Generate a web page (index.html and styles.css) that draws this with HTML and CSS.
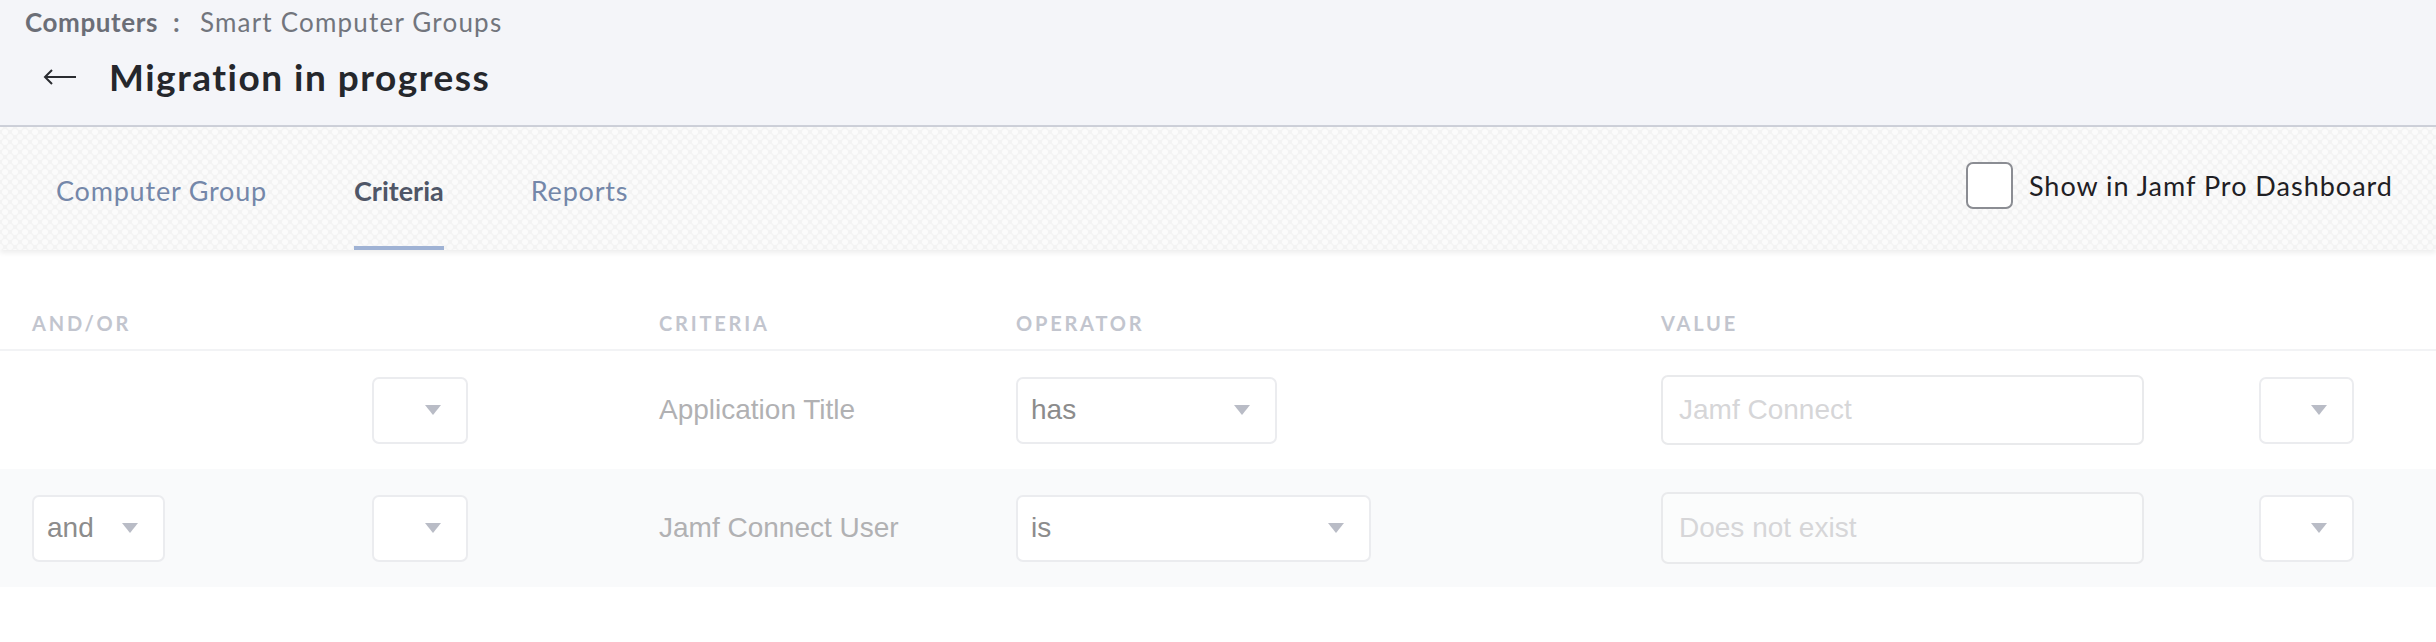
FILE: index.html
```html
<!DOCTYPE html>
<html>
<head>
<meta charset="utf-8">
<link rel="stylesheet" href="styles.css">
</head>
<body>
<div class="page-header">
  <div class="breadcrumb">
    <span class="crumb-root">Computers</span>
    <span class="crumb-sep">:</span>
    <span class="crumb-leaf">Smart Computer Groups</span>
  </div>
  <div class="title-row">
    <span class="back-arrow">
      <svg width="34" height="16" viewBox="0 0 34 16"><path d="M33 8H2M9 1L2 8l7 7" fill="none" stroke="#2a2c31" stroke-width="2"/></svg>
    </span>
    <h1 class="title">Migration in progress</h1>
  </div>
</div>

<div class="tabs-bar">
  <nav class="tabs">
    <a class="tab">Computer Group</a>
    <a class="tab tab-active">Criteria</a>
    <a class="tab">Reports</a>
  </nav>
  <label class="dash-check">
    <span class="checkbox"></span>
    <span class="check-label">Show in Jamf Pro Dashboard</span>
  </label>
</div>

<div class="criteria-table">
  <div class="row head-row">
    <div class="hcell">AND/OR</div>
    <div class="hcell"></div>
    <div class="hcell">CRITERIA</div>
    <div class="hcell">OPERATOR</div>
    <div class="hcell">VALUE</div>
    <div class="hcell"></div>
  </div>
  <div class="row data-row">
    <div class="cell"></div>
    <div class="cell"><div class="select sel-paren"><span class="sel-text"></span><span class="caret"></span></div></div>
    <div class="cell crit-name">Application Title</div>
    <div class="cell"><div class="select sel-has"><span class="sel-text">has</span><span class="caret"></span></div></div>
    <div class="cell"><div class="input">Jamf Connect</div></div>
    <div class="cell"><div class="select sel-paren-r"><span class="sel-text"></span><span class="caret"></span></div></div>
  </div>
  <div class="row data-row alt">
    <div class="cell"><div class="select sel-and"><span class="sel-text">and</span><span class="caret"></span></div></div>
    <div class="cell"><div class="select sel-paren"><span class="sel-text"></span><span class="caret"></span></div></div>
    <div class="cell crit-name">Jamf Connect User</div>
    <div class="cell"><div class="select sel-is"><span class="sel-text">is</span><span class="caret"></span></div></div>
    <div class="cell"><div class="input input-alt">Does not exist</div></div>
    <div class="cell"><div class="select sel-paren-r"><span class="sel-text"></span><span class="caret"></span></div></div>
  </div>
</div>
</body>
</html>
```

FILE: styles.css
```css
html, body {
  margin: 0;
  padding: 0;
  background: #ffffff;
}
body {
  width: 2436px;
  height: 642px;
  overflow: hidden;
  font-family: "Lato", "Liberation Sans", sans-serif;
}

.page-header {
  background: #f4f5f9;
  height: 125px;
  border-bottom: 2px solid #cdd0d9;
  box-sizing: content-box;
}
.breadcrumb {
  display: flex;
  align-items: baseline;
  padding: 8px 0 0 25px;
  font-size: 26px;
  letter-spacing: 1.2px;
  line-height: 28px;
  color: #72757d;
}
.crumb-root {
  font-weight: 700;
  color: #6b6e77;
  letter-spacing: 0.6px;
}
.crumb-sep {
  margin: 0 19px 0 15px;
  font-weight: 700;
}
.title-row {
  display: flex;
  align-items: center;
  padding-left: 43px;
  margin-top: 16px;
  height: 50px;
}
.back-arrow {
  display: flex;
  width: 34px;
  margin-right: 32px;
}
.title {
  margin: 0;
  font-size: 37px;
  font-weight: 700;
  letter-spacing: 1.5px;
  color: #25272c;
  line-height: 50px;
}

.tabs-bar {
  height: 123px;
  display: flex;
  align-items: stretch;
  justify-content: space-between;
  background-color: #f3f3f3;
  background-image:
    radial-gradient(circle, #fbfbfb 0 2.5px, transparent 3.5px),
    radial-gradient(circle, #fafafa 0 2.5px, transparent 3.5px);
  background-size: 10px 10px, 10px 10px;
  background-position: 0 0, 5px 5px;
  box-shadow: 0 3px 5px rgba(0, 0, 0, 0.07);
  position: relative;
}
.tabs {
  display: flex;
  padding-left: 56px;
  gap: 87px;
}
.tab {
  display: flex;
  align-items: center;
  font-size: 27px;
  letter-spacing: 0.8px;
  color: #7487a9;
  font-weight: 400;
  border-bottom: 4px solid transparent;
  box-sizing: border-box;
  padding-top: 7px;
}
.tab-active {
  color: #4f5667;
  font-weight: 700;
  letter-spacing: 0;
  border-bottom-color: #9fb2d4;
}
.dash-check {
  display: flex;
  align-items: center;
  padding-right: 43px;
  margin-top: -6px;
}
.checkbox {
  width: 43px;
  height: 43px;
  border: 2px solid #8b8d93;
  border-radius: 7px;
  background: #ffffff;
  margin-right: 16px;
}
.check-label {
  font-size: 27px;
  letter-spacing: 1px;
  color: #1f2024;
}

.row {
  display: grid;
  grid-template-columns: 340px 287px 357px 645px 598px 1fr;
  padding-left: 32px;
  align-items: center;
}
.head-row {
  height: 101px;
  align-items: end;
  border-bottom: 2px solid #f2f3f5;
  box-sizing: border-box;
}
.hcell {
  font-size: 20px;
  font-weight: 700;
  letter-spacing: 2.8px;
  color: #c2c5ce;
  padding-bottom: 14px;
}
.data-row {
  height: 118px;
}
.data-row.alt {
  background: #f9fafb;
}
.crit-name {
  font-family: "Liberation Sans", sans-serif;
  font-size: 28px;
  color: #b1b1b3;
}
.select {
  height: 67px;
  box-sizing: border-box;
  border: 2px solid #ebecef;
  border-radius: 7px;
  background: #ffffff;
  display: flex;
  align-items: center;
  justify-content: space-between;
  padding: 0 25px 0 13px;
  font-family: "Liberation Sans", sans-serif;
  font-size: 28px;
  color: #8c8c8c;
}
.caret {
  width: 0;
  height: 0;
  border-left: 8.5px solid transparent;
  border-right: 8.5px solid transparent;
  border-top: 10px solid #b9bcc6;
}
.sel-paren { width: 96px; }
.sel-paren-r { width: 95px; }
.sel-has { width: 261px; }
.sel-is { width: 355px; }
.sel-and { width: 133px; }
.input {
  width: 483px;
  height: 70px;
  box-sizing: border-box;
  border: 2px solid #e9eaec;
  border-radius: 7px;
  background: #ffffff;
  display: flex;
  align-items: center;
  padding-left: 16px;
  font-family: "Liberation Sans", sans-serif;
  font-size: 28px;
  color: #d6d6d8;
}
.input-alt {
  height: 72px;
  background: #fbfcfc;
}
```
